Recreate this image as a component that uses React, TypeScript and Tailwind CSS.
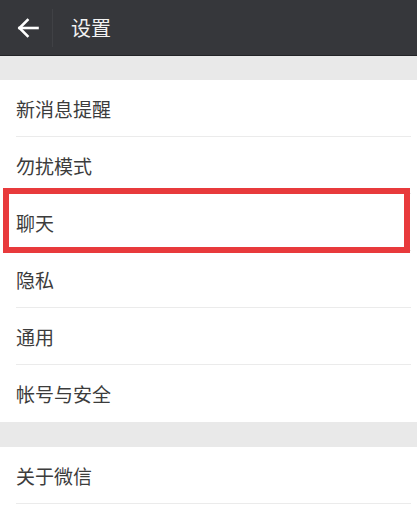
import React from "react";

const font = { fontFamily: '"Noto Sans CJK SC", "Noto Sans", sans-serif' };

function Row({ label, divider = true }: { label: string; divider?: boolean }) {
  return (
    <div className="h-[57px] flex flex-col bg-white">
      <div className="flex-1 flex items-center pl-4 pt-[2px] text-[19px] text-[#3c3c3c]">{label}</div>
      {divider ? <div className="ml-4 mr-[6px] h-px bg-[#ebebeb]" /> : null}
    </div>
  );
}

export default function App() {
  return (
    <div className="w-[417px] h-[508px] overflow-hidden bg-white" style={font}>
      <div className="h-[56px] bg-[#36373b] flex items-center border-b border-[#232427]">
        <div className="w-[52px] flex items-center justify-center pl-1">
          <svg width="22" height="20" viewBox="0 0 22 20" fill="none" stroke="#ffffff" strokeWidth="2.6" strokeLinecap="square">
            <path d="M2.5 10 H20.5" />
            <path d="M10.5 2 L2.5 10 L10.5 18" />
          </svg>
        </div>
        <div className="w-px h-[38px] bg-[#2a2b2e] border-r border-[#404145]" />
        <div className="ml-[18px] text-[20px] text-[#f2f2f2]">设置</div>
      </div>
      <div className="h-[24px] bg-[#e9e9e9]" />
      <Row label="新消息提醒" />
      <Row label="勿扰模式" />
      <div className="relative">
        <Row label="聊天" />
        <div className="absolute left-[3px] right-[7px] top-[-6px] bottom-[-2px] border-[6px] border-[#e83a3c]" />
      </div>
      <Row label="隐私" />
      <Row label="通用" />
      <Row label="帐号与安全" divider={false} />
      <div className="h-[25px] bg-[#e9e9e9]" />
      <Row label="关于微信" />
    </div>
  );
}
